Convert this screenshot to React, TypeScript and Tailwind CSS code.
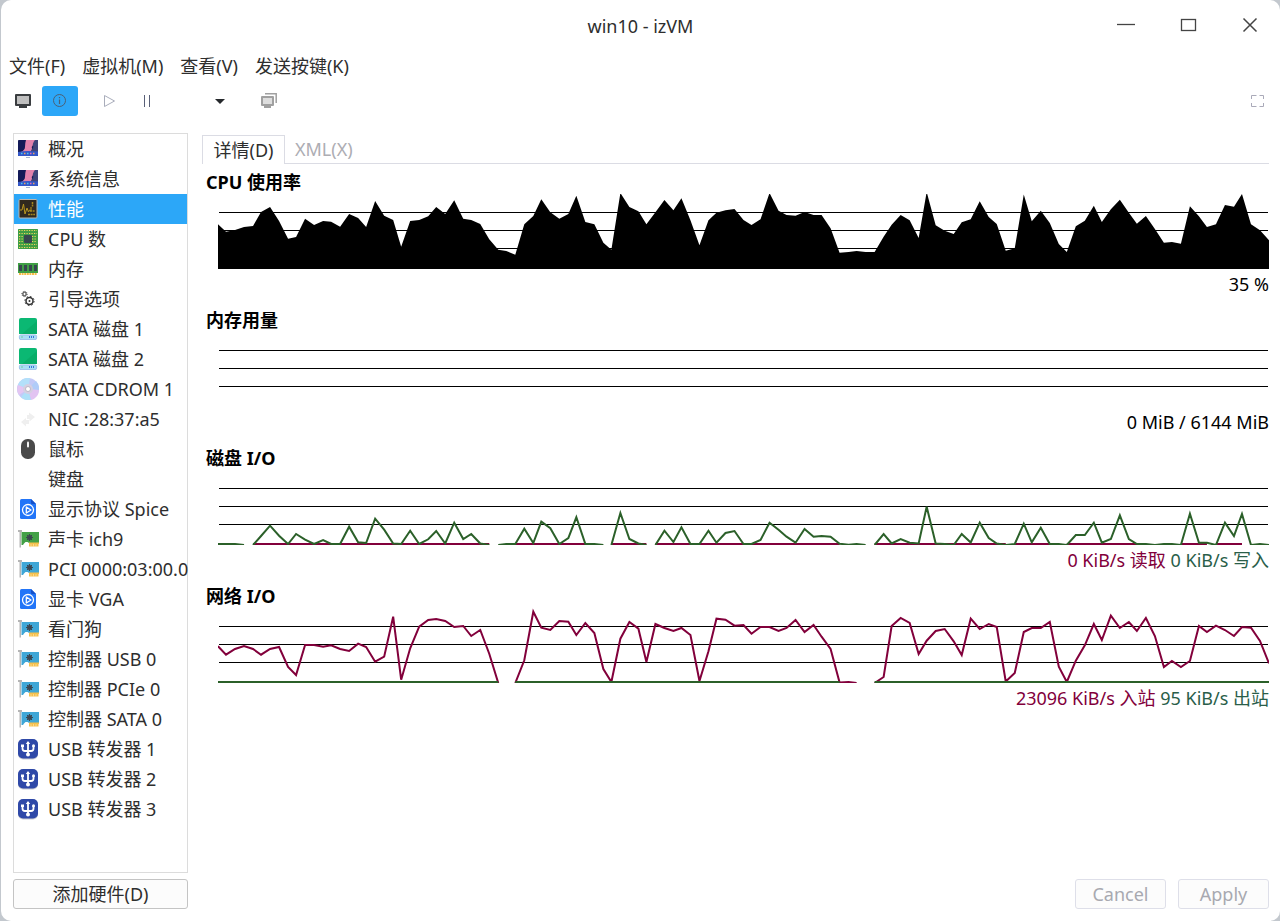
import * as React from "react"
import { clsx } from "clsx"

type IconName =
    | "computer"
    | "performance"
    | "cpu"
    | "memory"
    | "boot"
    | "disk"
    | "cdrom"
    | "nic"
    | "mouse"
    | "none"
    | "display"
    | "sound"
    | "card"
    | "usb"

interface Device {
    label: string
    icon: IconName
}

const MENUS = ["文件(F)", "虚拟机(M)", "查看(V)", "发送按键(K)"]

const DEVICES: Device[] = [
    { label: "概况", icon: "computer" },
    { label: "系统信息", icon: "computer" },
    { label: "性能", icon: "performance" },
    { label: "CPU 数", icon: "cpu" },
    { label: "内存", icon: "memory" },
    { label: "引导选项", icon: "boot" },
    { label: "SATA 磁盘 1", icon: "disk" },
    { label: "SATA 磁盘 2", icon: "disk" },
    { label: "SATA CDROM 1", icon: "cdrom" },
    { label: "NIC :28:37:a5", icon: "nic" },
    { label: "鼠标", icon: "mouse" },
    { label: "键盘", icon: "none" },
    { label: "显示协议 Spice", icon: "display" },
    { label: "声卡 ich9", icon: "sound" },
    { label: "PCI 0000:03:00.0", icon: "card" },
    { label: "显卡 VGA", icon: "display" },
    { label: "看门狗", icon: "card" },
    { label: "控制器 USB 0", icon: "card" },
    { label: "控制器 PCIe 0", icon: "card" },
    { label: "控制器 SATA 0", icon: "card" },
    { label: "USB 转发器 1", icon: "usb" },
    { label: "USB 转发器 2", icon: "usb" },
    { label: "USB 转发器 3", icon: "usb" },
]

// Samples are distances from the top of a 75 unit high graph, null is a gap
type Samples = (number | null)[]

const GRAPH_WIDTH = 1050
const GRAPH_HEIGHT = 75

const CPU: Samples = [
    30.3, 37.7, 36, 33, 32, 18, 13, 27, 44.7, 43, 24.7, 31, 27, 27.7, 32.7, 20, 24, 33, 7, 21.7,
    26, 52.7, 27, 26, 22.3, 13, 20, 6.3, 24.7, 26, 30, 45.3, 55.7, 57, 60.7, 30.3, 22, 5.3, 18.3, 24.7,
    20, 1.7, 28, 30.3, 48.7, 55.7, -1, 13, 17.3, 30.3, 18.3, 6, 16.3, 4.3, 26.3, 51.3, 26.3, 18.7, 16.3, 15,
    26, 31, 25.3, -1, 16.7, 21, 21.7, 18, 21, 21, 34.3, 58.7, 58, 57, 58, 58, 42.7, 30.7, 21, 26.3,
    44, -2, 31.3, 36.7, 40, 28.3, 25.3, 7.3, 23, 30, 56.7, 54.3, 0.5, 27.3, 16.7, 29, 50, 58, 32.3, 26.7,
    11.7, 28, 15.3, 5.7, 18.7, 29.7, 22, 35, 48.7, 48, 49.7, 12.3, 22.3, 33, 30.3, 11, 12.7, 0, 30.3, 36.3,
    46.3,
]

const DISK_WRITE: Samples = [
    74, 74, 74, 75, null, 66, 55.7, 65.7, 74, 64, 69.7, 74, 70, 74, 74, 56.7, 72.3, 73, 48.7, 59.7,
    73.5, 74, 60.7, 74, 69.3, 61, 73.5, 52.7, 69, 64, 73.5, 75, null, 74, 74, 58.7, 73, 51.7, 58.3, 74,
    68, 47.3, 74, 74, 75, null, 43, 69, 73.5, 75, null, 60.7, 72, 57.3, 74, 74, 60.7, 72.7, 63, 61,
    74, 74, 70, 52.7, 59.7, 66.7, 72.7, 59, 66.7, 66, 66.7, 73.7, 74.7, 74, 75, null, 64, 73.5, 69, 72.7,
    73.5, 36.7, 73.5, 74, 75, 64, 72.5, 52.7, 68, 73.5, 75, 74, 53.7, 72.3, 57.7, 74, 74, 75, 65, 65,
    52.7, 72.7, 69, 45.3, 69, 74, 74, 75, 74, 74, 75, 43.7, 72.7, 72.7, 75, 52.7, 66, 44, 75, 74,
    75,
]

const NET_IN: Samples = [
    38.3, 46.7, 41, 38, 41, 46.7, 41, 39, 59, 67, 37, 37, 38.7, 37.3, 41, 43, 35.7, 39, 53.7, 48.7,
    8.7, 71.7, 40.3, 18.7, 12, 11, 13, 19, 18, 28, 22, 45.7, 75, null, 75, 52.3, 3.7, 19.7, 22, 13,
    13.7, 27, 15, 25, 61, 74, 30.7, 14, 20.7, 54, 16, 20, 23, 20, 27, 73, 43.3, 10.7, 11.7, 17.7,
    17, 25.7, 19, 19, 23, 20, 12, 24, 17, 28.7, 41, 74.5, 74, 75, null, 75, 69, 18, 10, 15,
    46, 32.7, 23, 21, 33.3, 47, 10.7, 21, 16, 19, 73.5, 65, 24, 20, 20, 14, 58.7, 74, 52.7, 37.3,
    16, 32, 7.7, 20, 14, 23, 10, 28, 59, 53, 59, 53, 18, 24, 17.7, 22, 28, 19, 19.7, 33,
    55.3,
]

// Sample ranges in which the flat series is above zero
const DISK_READ_RUNS = [[4, 31], [34, 43], [45, 49], [50, 71], [75, 84], [84, 90], [91, 96], [97, 106], [110, 113], [114, 117]]
const NET_OUT_RUNS = [[0, 32], [34, 71], [75, 120]]

function sampleX(i: number) {
    return Math.floor((i * GRAPH_WIDTH) / 120)
}

// A graph that restarts after a gap rises from the base line
function linePath(samples: Samples) {
    let path = ""
    let open = false
    samples.forEach((value, i) => {
        if (value === null) {
            const next = samples[i + 1]
            open = typeof next === "number" && next < 75
            if (open) path += `M${sampleX(i)} ${GRAPH_HEIGHT}`
            return
        }
        path += `${open ? "L" : "M"}${sampleX(i)} ${value}`
        open = true
    })
    return path
}

function areaPath(samples: Samples) {
    return `${linePath(samples)}V${GRAPH_HEIGHT}H0Z`
}

function flatPath(runs: number[][]) {
    return runs.map(([from, to]) => `M${sampleX(from)} 74H${sampleX(to)}`).join("")
}

interface GraphProps {
    title: string
    children?: React.ReactNode
    legend: React.ReactNode
}

function Graph({ title, children, legend }: GraphProps) {
    return (
        <section className="mb-2.5">
            <h2 className="pb-0.5 text-lg leading-5 font-bold">{title}</h2>
            <svg
                className="block h-[75px] w-full pl-3"
                viewBox={`0 0 ${GRAPH_WIDTH} ${GRAPH_HEIGHT}`}
                preserveAspectRatio="none"
                role="img"
                aria-label={title}
            >
                <path d="M1 18.5H1049M1 36.5H1049M1 54.5H1049" stroke="#000" fill="none" />
                {children}
            </svg>
            <p className="text-right leading-[31px]">{legend}</p>
        </section>
    )
}

function ExpansionCard({ board }: { board: string }) {
    return (
        <>
            <path d="M0 1h4v2H3v15.500H1.500V3H0z" fill="#b5b5b5" />
            <path d="M3.500 3H21v11H11L9.500 13H7.500L6 14.500 5 16H3.500z" fill={board} />
            <path d="M11 13.500h10V15h-.5v2.500H11z" fill="#f5c04d" />
            <path d="M13 15v2.500M15.500 15v2.500M18 15v2.500" stroke="#fff3cc" strokeWidth=".5" />
            <circle cx="11.500" cy="8.500" r="2.500" fill="#3c4650" />
            <path d="M11.500 5v7M8 8.500h7M9 6l5 5M14 6l-5 5" stroke="#3c4650" />
        </>
    )
}

function DeviceIcon({ name }: { name: IconName }) {
    return (
        <svg className="size-[22px] shrink-0" viewBox="-1 -1 22 22" fill="none" aria-hidden="true">
            {name === "computer" && (
                <>
                    <rect y="1" width="20" height="16" rx=".8" fill="#131a58" />
                    <path d="M8 1h9q0 3-2 5t-1 4l-1 3H3q4-2 4-5 0-4 1-7z" fill="#e283ad" />
                    <path d="M17 1h3v12h-7q0-2 1.500-3.500T15 6.500 17 1z" fill="#3f4579" />
                    <path d="M0 13q5-1 10-1t10 .5V16a1 1 0 0 1-1 1H1a1 1 0 0 1-1-1z" fill="#3457c8" />
                    <path d="M3 14.500h1.500M9 14.500h1.500" stroke="#48c8f0" strokeWidth="1.500" />
                    <path d="M6 14.500h1.500M15 14.500h1.500" stroke="#f0a45c" strokeWidth="1.500" />
                    <path d="M12 14.500h1.500" stroke="#e46fb4" strokeWidth="1.500" />
                    <path d="M8 18.500h4" stroke="#a9b8cf" />
                </>
            )}
            {name === "performance" && (
                <>
                    <rect x="1" y=".5" width="18" height="18.500" rx="1" fill="#30291e" stroke="#b9b6ae" />
                    <path d="M2 11h2l1.500-6L7 15l2-6 1.500 4 1-2 1.500 1V8" stroke="#b8961e" />
                    <path d="M14.500 3v5M12 12h5M10 15.500h7" stroke="#a4861d" strokeWidth="1.500" strokeDasharray="2 .6" />
                </>
            )}
            {name === "cpu" && (
                <>
                    <rect width="20" height="20" rx=".5" fill="#3f9e45" />
                    <path
                        d="M1 1.500h18M1 4.500h18M1 15.500h18M1 18.500h18M1 7.500h5M14 7.500h5M1 10h5M14 10h5M1 12.500h5M14 12.500h5"
                        stroke="#f2d45e"
                        strokeWidth="1.200"
                        strokeDasharray="1.200 1.300"
                    />
                    <rect x="6" y="6" width="8" height="8" rx="1" fill="#37474f" />
                </>
            )}
            {name === "memory" && (
                <>
                    <path d="M0 4h20v10H0z" fill="#3f9e45" />
                    <path d="M1 6h3v6H1zM6 6h3v6H6zM11 6h3v6h-3zM16 6h3v6h-3z" fill="#37474f" />
                    <path d="M1 15h18" stroke="#f3bd44" strokeWidth="2" strokeDasharray="2 .6" />
                </>
            )}
            {name === "boot" && (
                <>
                    <circle cx="11.500" cy="12" r="3.500" stroke="#333" strokeWidth="1.500" />
                    <circle cx="11.500" cy="12" r="4.600" stroke="#333" strokeDasharray="1.600 2" />
                    <circle cx="11.500" cy="12" r="1" fill="#333" />
                    <circle cx="6.500" cy="5" r="1.700" stroke="#333" />
                    <circle cx="6.500" cy="5" r="2.600" stroke="#333" strokeDasharray="1 1" />
                </>
            )}
            {name === "disk" && (
                <>
                    <path d="M1 1a2 2 0 0 1 2-2h14a2 2 0 0 1 2 2v14H1z" fill="#0bb873" />
                    <path d="M4 15 19 2v13z" fill="#08ad68" />
                    <rect x="1.400" y="15.900" width="17.200" height="4.700" rx="1.500" fill="#a9def5" stroke="#8fb5e6" strokeWidth=".8" />
                    <path d="M11.500 17v2M13.500 17v2M15.500 17v2" stroke="#3878d8" />
                    <path d="M3 18h2" stroke="#74c8a8" />
                </>
            )}
            {name === "cdrom" && (
                <>
                    <circle cx="10" cy="10" r="11" fill="#c3c9f7" />
                    <path d="M10 10 0 6A11 11 0 0 1 12-1z" fill="#b3e0fa" />
                    <path d="m10 10 8-8a11 11 0 0 1 3 9z" fill="#b0ccf8" />
                    <path d="M10 10 1 16A11 11 0 0 1 0 6z" fill="#e4c6f2" />
                    <path d="m10 10 11 1a11 11 0 0 1-8 10z" fill="#e2c4f2" />
                    <path d="m10 10 3 11a11 11 0 0 1-10-3z" fill="#aee0f8" />
                    <circle cx="10" cy="10" r="5" fill="#d5cfe2" />
                    <circle cx="10" cy="10" r="2.500" fill="#fff" stroke="#bcb8c6" />
                </>
            )}
            {name === "nic" && <path d="M11 3.500 17 8l-5.500 4.500V10H9V6h2zM8 9v2h3v4H8v2.500L3 13z" fill="#efefef" />}
            {name === "mouse" && (
                <>
                    <rect x="3" width="14" height="20" rx="6.500" fill="#4a4a4a" />
                    <path d="M10 3.500v4" stroke="#f4f4f4" strokeWidth="2" strokeLinecap="round" />
                </>
            )}
            {name === "display" && (
                <>
                    <path d="M2 1.500A1.500 1.500 0 0 1 3.500 0H13l5 5v13.500a1.500 1.500 0 0 1-1.500 1.500h-13A1.500 1.500 0 0 1 2 18.500z" fill="#2275f8" />
                    <path d="M13 0l5 5h-4a1 1 0 0 1-1-1z" fill="#1550c8" />
                    <circle cx="10" cy="11" r="5.500" stroke="#fff" strokeWidth="1.300" />
                    <path d="m8.300 8 4.700 3-4.700 3z" stroke="#fff" strokeWidth="1.300" strokeLinejoin="round" />
                </>
            )}
            {name === "sound" && <ExpansionCard board="#43a047" />}
            {name === "card" && <ExpansionCard board="#3fa6d6" />}
            {name === "usb" && (
                <>
                    <rect y=".5" width="20" height="20" rx="5" fill="#c9cbd3" />
                    <rect width="20" height="19.500" rx="5" fill="#2f49a8" />
                    <path d="M10 3.500V15M4.500 7v2.500Q4.500 12 7 12h6q2.500 0 2.500-2.500V7" stroke="#fff" strokeWidth="1.800" />
                    <path d="m7.800 5 2.200-3 2.200 3zM3 5.500h3v2.500H3z" fill="#fff" />
                    <circle cx="15.500" cy="6.700" r="1.500" fill="#fff" />
                    <circle cx="10" cy="15.500" r="2" fill="#fff" />
                </>
            )}
        </svg>
    )
}

function TitleBar() {
    return (
        <header className="grid h-[52px] grid-cols-[1fr_auto_1fr] items-center px-[18px]">
            <h1 className="col-start-2">win10 - izVM</h1>
            <div className="flex justify-end gap-10 text-[#444]">
                <button type="button" aria-label="最小化">
                    <svg className="size-[22px]" viewBox="0 0 22 22" fill="none" stroke="currentColor" strokeWidth="1.300">
                        <path d="M1 9.500h18" />
                    </svg>
                </button>
                <button type="button" aria-label="最大化">
                    <svg className="size-[22px]" viewBox="0 0 22 22" fill="none" stroke="currentColor" strokeWidth="1.300">
                        <rect x="3.500" y="4.500" width="14" height="11" />
                    </svg>
                </button>
                <button type="button" aria-label="关闭">
                    <svg className="size-[22px]" viewBox="0 0 22 22" fill="none" stroke="currentColor" strokeWidth="1.500">
                        <path d="m3.500 3.500 13 13M16.500 3.500l-13 13" />
                    </svg>
                </button>
            </div>
        </header>
    )
}

function Toolbar() {
    return (
        <div role="toolbar" className="flex h-[30px] items-center pr-3.5 pl-[11px]">
            <button type="button" aria-label="控制台" className="mr-2">
                <svg className="size-[22px]" viewBox="0 0 22 22">
                    <path d="M4 4h14a1 1 0 0 1 1 1v10a1 1 0 0 1-1 1h-3v2H7v-2H4a1 1 0 0 1-1-1V5a1 1 0 0 1 1-1z" fill="#3a3d40" />
                    <path d="M5 6h12v8H5z" fill="#bfbfbf" />
                </svg>
            </button>
            <button type="button" aria-label="详情" className="flex h-[30px] w-9 items-center justify-center rounded-[3px] bg-[#2ca7f8]">
                <svg className="size-4" viewBox="0 0 16 16" fill="none" stroke="#4b6076">
                    <circle cx="7.500" cy="7.500" r="6" />
                    <path d="M7.500 6.500V11M7.500 4v1.300" strokeWidth="1.200" />
                </svg>
            </button>
            <button type="button" aria-label="运行" className="ml-5">
                <svg className="size-[22px]" viewBox="0 0 22 22" fill="none" stroke="#a9adbb">
                    <path d="M6.500 5.500v11l10-5.500z" />
                </svg>
            </button>
            <button type="button" aria-label="暂停" className="ml-4">
                <svg className="size-[22px]" viewBox="0 0 22 22" stroke="#596078">
                    <path d="M8.500 5v12M13.500 5v12" />
                </svg>
            </button>
            <button type="button" aria-label="关机选项" className="ml-[51px]">
                <svg className="size-[22px]" viewBox="0 0 22 22">
                    <path d="M6 9h10l-5 5z" fill="#26292c" />
                </svg>
            </button>
            <button type="button" aria-label="快照" className="ml-[27px]">
                <svg className="size-[22px]" viewBox="0 0 22 22">
                    <path d="M7 3.800h11.200V13" fill="none" stroke="#a0a0a0" strokeWidth="1.500" />
                    <path d="M4 6h11a1 1 0 0 1 1 1v8a1 1 0 0 1-1 1h-2v2H6v-2H4a1 1 0 0 1-1-1V7a1 1 0 0 1 1-1z" fill="#a0a0a0" />
                    <path d="M5 8h9v6H5z" fill="#dedede" />
                </svg>
            </button>
            <button type="button" aria-label="全屏" className="ml-auto">
                <svg className="size-4" viewBox="0 0 16 16" fill="none" stroke="#aaaab9">
                    <path d="M1.500 6V2.500h5M9.500 2.500h4V6M13.500 10v3.500h-4M6.500 13.500h-5V10" />
                </svg>
            </button>
        </div>
    )
}

export default function App() {
    const [selected, setSelected] = React.useState(2)

    return (
        <div className="min-h-screen bg-[#c3c8ce] pl-px font-['Noto_Sans','Noto_Sans_CJK_SC',sans-serif] text-lg text-[#2e2e2e]">
            <div className="flex min-h-screen flex-col rounded-[10px] bg-white">
                <TitleBar />
                <nav className="flex h-[34px] items-start gap-[17px] pl-2 leading-7">
                    {MENUS.map((menu) => (
                        <button key={menu} type="button">
                            {menu}
                        </button>
                    ))}
                </nav>
                <Toolbar />

                <div className="flex grow gap-3.5 pt-[17px] pr-[11px] pb-3 pl-3">
                    <aside className="flex w-[175px] shrink-0 flex-col gap-1.5">
                        <ul className="grow border border-[#dcdcdc]">
                            {DEVICES.map((device, i) => (
                                <li key={device.label}>
                                    <button
                                        type="button"
                                        onClick={() => setSelected(i)}
                                        className={clsx(
                                            "flex h-[30px] w-full items-center gap-[9px] pl-[3px] whitespace-nowrap",
                                            i === selected && "bg-[#2ca7f8] text-white"
                                        )}
                                    >
                                        <DeviceIcon name={device.icon} />
                                        {device.label}
                                    </button>
                                </li>
                            ))}
                        </ul>
                        <button type="button" className="h-[30px] rounded-[3px] border border-[#c4c4c4] bg-[#fcfcfc]">
                            添加硬件(D)
                        </button>
                    </aside>

                    <main className="flex min-w-0 grow flex-col pt-0.5">
                        <div role="tablist" className="flex h-[29px] border-b border-[#dbdce4] leading-[29px]">
                            <button
                                type="button"
                                role="tab"
                                aria-selected="true"
                                className="-mb-px w-[83px] border border-b-0 border-[#dbdce4] bg-white"
                            >
                                详情(D)
                            </button>
                            <button type="button" role="tab" aria-selected="false" className="ml-2.5 text-[#adadb3]">
                                XML(X)
                            </button>
                        </div>

                        <div className="grow pt-2 pl-1 text-black">
                            <Graph title="CPU 使用率" legend="35 %">
                                <path d={areaPath(CPU)} fill="#000" />
                            </Graph>
                            <Graph title="内存用量" legend="0 MiB / 6144 MiB" />
                            <Graph
                                title="磁盘 I/O"
                                legend={
                                    <>
                                        <span className="text-[#82003b]">0 KiB/s 读取</span>{" "}
                                        <span className="text-[#2a5e49]">0 KiB/s 写入</span>
                                    </>
                                }
                            >
                                <path d={flatPath(DISK_READ_RUNS)} fill="none" stroke="#82003b" strokeWidth="2" />
                                <path d={linePath(DISK_WRITE)} fill="none" stroke="#2b6029" strokeWidth="2" />
                            </Graph>
                            <Graph
                                title="网络 I/O"
                                legend={
                                    <>
                                        <span className="text-[#82003b]">23096 KiB/s 入站</span>{" "}
                                        <span className="text-[#2a5e49]">95 KiB/s 出站</span>
                                    </>
                                }
                            >
                                <path d={linePath(NET_IN)} fill="none" stroke="#82003b" strokeWidth="2" />
                                <path d={flatPath(NET_OUT_RUNS)} fill="none" stroke="#2b6029" strokeWidth="2" />
                            </Graph>
                        </div>

                        <div className="flex justify-end gap-3 text-[#a8a9b0]">
                            <button type="button" disabled className="h-[30px] w-[91px] rounded-[3px] border border-[#dedfe9] bg-[#fcfcfc]">
                                Cancel
                            </button>
                            <button type="button" disabled className="h-[30px] w-[91px] rounded-[3px] border border-[#dedfe9] bg-[#fcfcfc]">
                                Apply
                            </button>
                        </div>
                    </main>
                </div>
            </div>
        </div>
    )
}
